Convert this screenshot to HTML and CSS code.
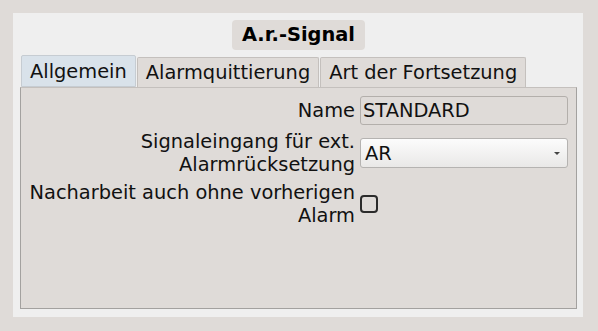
FILE: index.html
```html
<!doctype html>
<html lang="de">
    <head>
        <meta charset="UTF-8" />
        <title>A.r.-Signal</title>
        <link rel="stylesheet" href="styles.css">
    </head>
    <body>
        <div class="dialog">
            <div class="title">A.r.-Signal</div>

            <div class="tabs">
                <div class="tab active">Allgemein</div>
                <div class="tab">Alarmquittierung</div>
                <div class="tab">Art der Fortsetzung</div>
            </div>

            <div class="tab-page">
                <div class="form">
                    <label class="form-label">Name</label>
                    <input class="text-field" type="text" value="STANDARD" readonly>

                    <label class="form-label">Signaleingang für ext.<br>Alarmrücksetzung</label>
                    <div class="combo">
                        <span>AR</span>
                        <span class="combo-arrow"></span>
                    </div>

                    <label class="form-label">Nacharbeit auch ohne vorherigen<br>Alarm</label>
                    <input class="check" type="checkbox">
                </div>
            </div>
        </div>
    </body>
</html>
```

FILE: styles.css
```css
body {
    margin: 0;
    padding: 13px 15px 14px 13px;
    background-color: #dfdbd8;
    font-family: "DejaVu Sans", sans-serif;
    font-size: 19.4px;
    color: #111;
}

.dialog {
    width: 570px;
    height: 304px;
    box-sizing: border-box;
    padding: 7px 6px 8px 7px;
    background-color: #efefef;
    display: flex;
    flex-direction: column;
}

.title {
    align-self: center;
    height: 30px;
    line-height: 30px;
    padding: 0 10px;
    background-color: #dfdbd8;
    border-radius: 4px;
    font-weight: bold;
    color: #000;
}

.tabs {
    display: flex;
    align-items: flex-end;
    margin-top: 5px;
    padding-left: 1px;
}

.tab {
    height: 30px;
    line-height: 30px;
    box-sizing: border-box;
    padding: 0 8px;
    background-color: #dfdbd8;
    border: 1px solid #c4c0bd;
    border-bottom: none;
    border-radius: 2px 2px 0 0;
    white-space: nowrap;
}

.tab.active {
    height: 32px;
    line-height: 31px;
    background-color: #d9e2ea;
    border-color: #c6ccd2;
    border-bottom: 1px solid #c6ccd2;
}

.tab + .tab {
    margin-left: 1px;
}

.tab-page {
    flex: 1;
    background-color: #dfdbd8;
    border: 1px solid #a3a19f;
    border-top-color: #c4c0bd;
    padding: 8px 8px 0 8px;
}

.form {
    display: grid;
    grid-template-columns: 1fr 208px;
    column-gap: 5px;
    row-gap: 5px;
    align-items: center;
}

.form-label {
    text-align: right;
    line-height: 23px;
    white-space: nowrap;
}

.text-field {
    height: 29px;
    box-sizing: border-box;
    margin: 0;
    padding: 0 2px;
    font: inherit;
    color: #111;
    background-color: #dfdbd8;
    border: 1px solid #b3afab;
    border-radius: 3px;
    outline: none;
}

.combo {
    height: 30px;
    box-sizing: border-box;
    padding: 0 5px 0 4px;
    display: flex;
    align-items: center;
    justify-content: space-between;
    background: linear-gradient(#fcfcfc, #e9e8e7);
    border: 1px solid #b5b3b1;
    border-radius: 3px;
}

.combo-arrow {
    width: 0;
    height: 0;
    margin-right: 2px;
    border-left: 3px solid transparent;
    border-right: 3px solid transparent;
    border-top: 3px solid #444;
}

.check {
    appearance: none;
    width: 18px;
    height: 18px;
    margin: 0;
    box-sizing: border-box;
    border: 2px solid #2b2b2b;
    border-radius: 4px;
    background: transparent;
}
```
